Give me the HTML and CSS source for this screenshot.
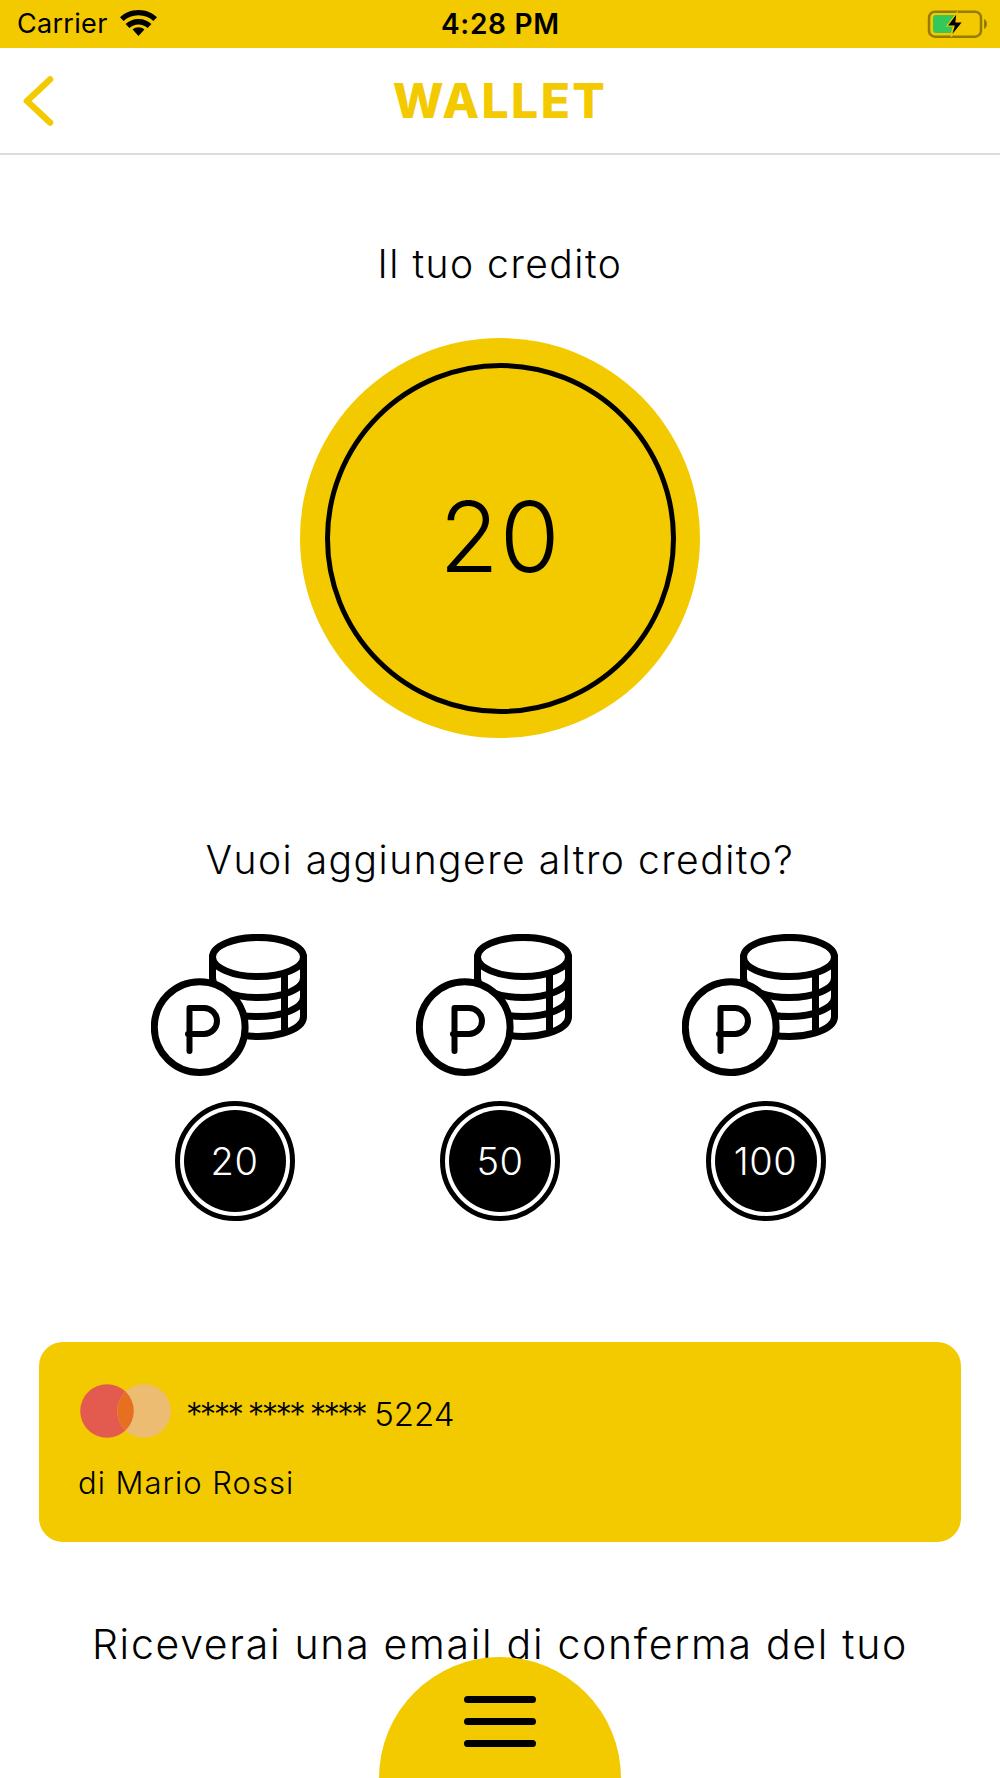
FILE: index.html
```html
<!DOCTYPE html>
<html lang="it">
<head>
<meta charset="utf-8">
<title>Wallet</title>
<link rel="stylesheet" href="styles.css">
</head>
<body>
<div class="page">
  <svg width="0" height="0" class="defs">
    <symbol id="coins" viewBox="0 0 160 145">
      <g fill="none" stroke="#000" stroke-width="7" stroke-linecap="round" stroke-linejoin="round">
        <ellipse cx="107" cy="23" rx="45.5" ry="19.6"/>
        <path d="M61.500 23V82M152.500 23V82"/>
        <path d="M152.500 44A45.5 19.6 0 0 1 61.500 44"/>
        <path d="M152.500 63A45.5 19.6 0 0 1 61.500 63"/>
        <path d="M152.500 83A45.5 19.6 0 0 1 90 101"/>
        <path d="M133.500 41V98"/>
        <circle cx="48.7" cy="93.2" r="45.4" fill="#fff"/>
        <path d="M38.5 74H53A13 13 0 0 1 53 100H37M38.5 74V117" stroke-width="6"/>
      </g>
    </symbol>
  </svg>

  <header class="status">
    <div class="status-left">
      <span class="carrier">Carrier</span>
      <svg class="wifi" viewBox="0 0 37 26"><path d="M18.5 26 12.6 19.6C16 16.6 21 16.6 24.4 19.6Z M18.5 9C24 9 28.2 11 31.4 14L27.6 18C25 15.6 22 14.4 18.5 14.4 15 14.4 12 15.6 9.4 18L5.6 14C8.8 11 13 9 18.5 9Z M18.5 0C26 0 32.4 2.8 37 7.2L33.4 11C29.6 7.400 24.4 5.300 18.500 5.300 12.600 5.300 7.400 7.400 3.600 11L0 7.200C4.600 2.800 11 0 18.500 0Z"/></svg>
    </div>
    <span class="time">4:28 PM</span>
    <svg class="battery" viewBox="0 0 60 30">
      <rect x="2" y="2.700" width="52" height="25" rx="6" fill="none" stroke="#937b05" stroke-width="2.500"/>
      <path d="M57 10c2 .7 3 2.800 3 5s-1 4.300-3 5z" fill="#937b05"/>
      <path d="M9 6h20l-9 11h6l-2 7H9a3 3 0 0 1-3-3V9a3 3 0 0 1 3-3z" fill="#34c759"/>
      <path d="M30 3.700 20 17h7l-3 10.700L35.700 13H29z" fill="#000" stroke="#f3ca00" stroke-width="1.200"/>
    </svg>
  </header>

  <nav class="navbar">
    <svg class="back" viewBox="0 0 36 56"><path d="M29 6.500 6 28l23 21.500" fill="none" stroke="#f3ca00" stroke-width="6.500" stroke-linecap="round" stroke-linejoin="round"/></svg>
    <h1 class="title">WALLET</h1>
  </nav>

  <main class="content">
    <p class="lead">Il tuo credito</p>
    <div class="balance"><div class="balance-ring">20</div></div>

    <p class="lead lead-add">Vuoi aggiungere altro credito?</p>
    <div class="options">
      <div class="option">
        <svg class="coins"><use href="#coins"/></svg>
        <div class="amount"><span>20</span></div>
      </div>
      <div class="option">
        <svg class="coins"><use href="#coins"/></svg>
        <div class="amount"><span>50</span></div>
      </div>
      <div class="option">
        <svg class="coins"><use href="#coins"/></svg>
        <div class="amount"><span>100</span></div>
      </div>
    </div>

    <section class="card">
      <div class="card-row">
        <svg class="mc" viewBox="0 0 91 54">
          <circle cx="27" cy="27" r="26.800" fill="#e35b4e"/>
          <circle cx="64" cy="27" r="26.800" fill="#ecbc72"/>
          <path d="M45.500 7.600a26.800 26.800 0 0 1 0 38.800 26.800 26.800 0 0 1 0-38.800z" fill="#e76f22"/>
        </svg>
        <span class="card-number"><span class="stars">**** **** ****</span> 5224</span>
      </div>
      <p class="card-owner">di Mario Rossi</p>
    </section>

    <p class="note">Riceverai una email di conferma del tuo</p>
  </main>

  <button class="fab" aria-label="Menu">
    <span class="bar"></span><span class="bar"></span><span class="bar"></span>
  </button>
</div>
</body>
</html>
```

FILE: styles.css
```css
* { box-sizing: border-box; }
html, body { margin: 0; padding: 0; background: #fff; }
body { font-family: Inter, "Liberation Sans", sans-serif; color: #000; }
p, h1 { margin: 0; }
.defs { position: absolute; }
.page { position: relative; width: 1000px; height: 1778px; overflow: hidden; background: #fff; }

.status { height: 48px; background: #f3ca00; display: flex; align-items: center; justify-content: space-between; padding: 0 13px 0 17px; position: relative; }
.status-left { display: flex; align-items: center; gap: 12px; }
.carrier { font-size: 27px; line-height: 48px; letter-spacing: .3px; }
.wifi { width: 37px; height: 26px; margin-top: -2px; }
.time { position: absolute; left: 441px; font-size: 28px; font-weight: 600; line-height: 48px; letter-spacing: .7px; }
.battery { width: 60px; height: 30px; margin-top: -1px; }

.navbar { height: 107px; border-bottom: 2px solid #dcdcdc; display: flex; align-items: center; justify-content: center; position: relative; }
.back { position: absolute; left: 21px; top: 25px; width: 36px; height: 56px; }
.title { font-size: 48px; font-weight: 800; color: #f3ca00; letter-spacing: 2.4px; line-height: 1; }

.content { display: flex; flex-direction: column; align-items: center; padding-top: 86px; }
.lead { font-size: 39px; line-height: 46px; letter-spacing: 1.5px; font-weight: 350; }
.balance { width: 400px; height: 400px; margin-top: 51px; border-radius: 50%; background: #f3ca00; display: flex; align-items: center; justify-content: center; }
.balance-ring { width: 351px; height: 351px; border: 5px solid #000; border-radius: 50%; display: flex; align-items: center; justify-content: center; font-size: 97px; font-weight: 340; letter-spacing: 1px; padding-bottom: 3px; }
.lead-add { margin-top: 99px; }

.options { display: flex; justify-content: center; gap: 105.500px; margin-top: 51px; margin-left: -8px; }
.option { width: 160px; display: flex; flex-direction: column; align-items: center; }
.coins { width: 160px; height: 145px; display: block; }
.amount { width: 120px; height: 120px; margin-top: 22px; margin-left: 8px; border-radius: 50%; border: 5px solid #000; padding: 4px; background: #fff; }
.amount span { width: 100%; height: 100%; border-radius: 50%; background: #000; color: #fff; display: flex; align-items: center; justify-content: center; font-size: 38px; font-weight: 350; letter-spacing: .5px; }

.card { align-self: stretch; margin: 121px 39px 0; height: 200px; background: #f3ca00; border-radius: 24px; padding: 38px 0 0 39px; }
.card-row { display: flex; align-items: center; gap: 15px; margin-left: 2px; }
.mc { width: 91px; height: 54px; display: block; }
.card-number { font-size: 33px; line-height: 54px; font-weight: 350; margin-top: 7px; }
.stars { letter-spacing: -2.700px; }
.card-owner { font-size: 31px; line-height: 38px; margin-top: 23px; letter-spacing: 1px; font-weight: 350; }

.note { margin-top: 77px; font-size: 41px; line-height: 50px; letter-spacing: 1.700px; white-space: nowrap; font-weight: 350; }

.fab { position: absolute; left: 379px; top: 1657px; width: 242px; height: 242px; border: 0; padding: 39px 0 0; border-radius: 50%; background: #f3ca00; display: flex; flex-direction: column; align-items: center; gap: 15px; }
.bar { width: 72px; height: 7px; border-radius: 4px; background: #000; display: block; }
```
